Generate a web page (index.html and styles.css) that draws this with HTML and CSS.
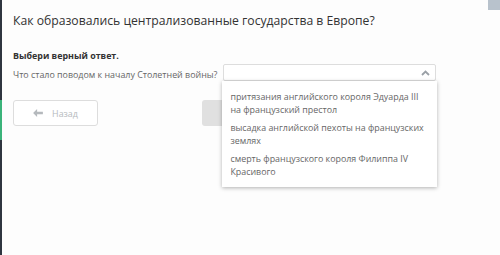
FILE: index.html
```html
<!DOCTYPE html>
<html lang="ru">
    <head>
        <meta charset="UTF-8" />
        <meta name="viewport" content="width=device-width, initial-scale=1.0" />
        <title>Тест</title>
        <link rel="stylesheet" href="styles.css">
    </head>
    <body>
        <div class="page">
            <div class="sidebar">
                <div class="side-dark"></div>
                <div class="side-green"></div>
                <div class="side-dark grow"></div>
            </div>

            <div class="content">
                <div class="corner"></div>
                <h1>Как образовались централизованные государства в Европе?</h1>

                <p class="task">Выбери верный ответ.</p>

                <div class="question">
                    <span class="label">Что стало поводом к началу Столетней войны?</span>
                    <div class="select">
                        <div class="select-box">
                            <svg class="chevron" width="9" height="6" viewBox="0 0 9 6">
                                <path d="M1 5 L4.5 1.5 L8 5" fill="none" stroke="#9aa0a6" stroke-width="1.8"/>
                            </svg>
                        </div>
                        <ul class="options">
                            <li>притязания английского короля Эдуарда III на французский престол</li>
                            <li>высадка английской пехоты на французских землях</li>
                            <li>смерть французского короля Филиппа IV Красивого</li>
                        </ul>
                    </div>
                </div>

                <div class="nav">
                    <button class="back">
                        <svg width="10" height="8" viewBox="0 0 11 9">
                            <path d="M0 4.5 L4.5 0 L4.5 3 L11 3 L11 6 L4.5 6 L4.5 9 Z" fill="#b5b9bd"/>
                        </svg>
                        Назад
                    </button>
                    <!-- "next" button, its label is covered by the open list -->
                    <button class="next"></button>
                </div>
            </div>
        </div>
    </body>
</html>
```

FILE: styles.css
```css
body {
    margin: 0;
    font-family: "Open Sans", Arial, sans-serif;
    background-color: #fdfdfd;
}

.page {
    display: flex;
    height: 255px;
}

.sidebar {
    width: 2px;
    display: flex;
    flex-direction: column;
}

.side-dark {
    height: 100px;
    background-color: #2f3540;
}

.side-green {
    height: 40px;
    background-color: #3bb37a;
}

.grow {
    flex: 1;
}

.content {
    position: relative;
    flex: 1;
    padding-left: 11px;
}

.corner {
    position: absolute;
    top: 0;
    right: 0;
    width: 12px;
    height: 10px;
    background-color: #b8c2cc;
}

h1 {
    margin: 12px 0 0;
    font-size: 12.2px;
    line-height: 17px;
    font-weight: normal;
    color: #333;
}

.task {
    margin: 21px 0 0;
    font-size: 8.9px;
    line-height: 12px;
    font-weight: bold;
    color: #333;
}

.question {
    display: flex;
    align-items: flex-start;
    margin-top: 2px;
}

.label {
    font-size: 8.9px;
    color: #666;
    line-height: 16px;
    margin-right: 6px;
    margin-top: 3px;
}

.select {
    position: relative;
    width: 213px;
}

.select-box {
    height: 15px;
    border: 1px solid #ddd;
    border-radius: 2px;
    background-color: #fff;
    display: flex;
    justify-content: flex-end;
    align-items: center;
    padding-right: 5px;
}

.options {
    position: absolute;
    top: 17px;
    left: -1px;
    width: 215px;
    margin: 0;
    padding: 6px 0 7px;
    list-style: none;
    background-color: #fff;
    box-shadow: 0 1px 4px rgba(0, 0, 0, 0.3);
    z-index: 2;
}

.options li {
    font-size: 8.9px;
    line-height: 12.5px;
    color: #666;
    padding: 4px 8px 2px;
    min-height: 25px;
}

.nav {
    display: flex;
    gap: 104px;
    margin-top: 17px;
}

.nav button {
    height: 26px;
    border-radius: 3px;
    font-family: "Open Sans", Arial, sans-serif;
    font-size: 8.9px;
}

.back {
    width: 85px;
    border: 1px solid #ddd;
    background-color: #fff;
    color: #b5b9bd;
    display: flex;
    align-items: center;
    justify-content: center;
    gap: 9px;
}

.next {
    width: 85px;
    border: none;
    background-color: #e0e0e0;
}
```
